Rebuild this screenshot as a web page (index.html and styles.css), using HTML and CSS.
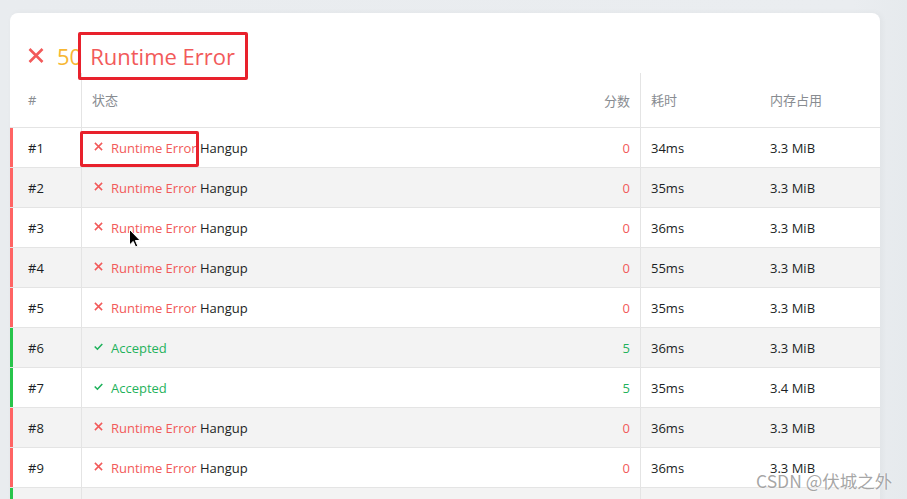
FILE: index.html
```html
<!DOCTYPE html>
<html lang="zh">
<head>
<meta charset="utf-8">
<title>Submission</title>
<link rel="stylesheet" href="styles.css">
</head>
<body>
<div class="card">
  <div class="title">
    <svg class="t-icon" width="16" height="15" viewBox="0 0 16 15"><path d="M1.5 1 L14.5 14 M14.5 1 L1.5 14" stroke="#f25a5a" stroke-width="2.6" fill="none"/></svg>
    <span class="t-score">50</span>
    <span class="t-status">Runtime Error</span>
  </div>
  <div class="table">
    <div class="row head">
      <div class="c c-id">#</div>
      <div class="c c-status">状态</div>
      <div class="c c-score">分数</div>
      <div class="c c-time">耗时</div>
      <div class="c c-mem">内存占用</div>
    </div>
    <div class="row re">
      <div class="c c-id">#1</div>
      <div class="c c-status"><svg class="ic" viewBox="0 0 10 10"><path d="M1 1 L9 9 M9 1 L1 9"/></svg><span class="st">Runtime Error</span>&nbsp;Hangup</div>
      <div class="c c-score">0</div>
      <div class="c c-time">34ms</div>
      <div class="c c-mem">3.3 MiB</div>
    </div>
    <div class="row re alt">
      <div class="c c-id">#2</div>
      <div class="c c-status"><svg class="ic" viewBox="0 0 10 10"><path d="M1 1 L9 9 M9 1 L1 9"/></svg><span class="st">Runtime Error</span>&nbsp;Hangup</div>
      <div class="c c-score">0</div>
      <div class="c c-time">35ms</div>
      <div class="c c-mem">3.3 MiB</div>
    </div>
    <div class="row re">
      <div class="c c-id">#3</div>
      <div class="c c-status"><svg class="ic" viewBox="0 0 10 10"><path d="M1 1 L9 9 M9 1 L1 9"/></svg><span class="st">Runtime Error</span>&nbsp;Hangup</div>
      <div class="c c-score">0</div>
      <div class="c c-time">36ms</div>
      <div class="c c-mem">3.3 MiB</div>
    </div>
    <div class="row re alt">
      <div class="c c-id">#4</div>
      <div class="c c-status"><svg class="ic" viewBox="0 0 10 10"><path d="M1 1 L9 9 M9 1 L1 9"/></svg><span class="st">Runtime Error</span>&nbsp;Hangup</div>
      <div class="c c-score">0</div>
      <div class="c c-time">55ms</div>
      <div class="c c-mem">3.3 MiB</div>
    </div>
    <div class="row re">
      <div class="c c-id">#5</div>
      <div class="c c-status"><svg class="ic" viewBox="0 0 10 10"><path d="M1 1 L9 9 M9 1 L1 9"/></svg><span class="st">Runtime Error</span>&nbsp;Hangup</div>
      <div class="c c-score">0</div>
      <div class="c c-time">35ms</div>
      <div class="c c-mem">3.3 MiB</div>
    </div>
    <div class="row ac alt">
      <div class="c c-id">#6</div>
      <div class="c c-status"><svg class="ic" viewBox="0 0 10 10"><path d="M0.8 5 L3.8 8 L9.2 2.2"/></svg><span class="st">Accepted</span></div>
      <div class="c c-score">5</div>
      <div class="c c-time">36ms</div>
      <div class="c c-mem">3.3 MiB</div>
    </div>
    <div class="row ac">
      <div class="c c-id">#7</div>
      <div class="c c-status"><svg class="ic" viewBox="0 0 10 10"><path d="M0.8 5 L3.8 8 L9.2 2.2"/></svg><span class="st">Accepted</span></div>
      <div class="c c-score">5</div>
      <div class="c c-time">35ms</div>
      <div class="c c-mem">3.4 MiB</div>
    </div>
    <div class="row re alt">
      <div class="c c-id">#8</div>
      <div class="c c-status"><svg class="ic" viewBox="0 0 10 10"><path d="M1 1 L9 9 M9 1 L1 9"/></svg><span class="st">Runtime Error</span>&nbsp;Hangup</div>
      <div class="c c-score">0</div>
      <div class="c c-time">36ms</div>
      <div class="c c-mem">3.3 MiB</div>
    </div>
    <div class="row re">
      <div class="c c-id">#9</div>
      <div class="c c-status"><svg class="ic" viewBox="0 0 10 10"><path d="M1 1 L9 9 M9 1 L1 9"/></svg><span class="st">Runtime Error</span>&nbsp;Hangup</div>
      <div class="c c-score">0</div>
      <div class="c c-time">36ms</div>
      <div class="c c-mem">3.3 MiB</div>
    </div>
    <div class="row ac alt last">
      <div class="c c-id"></div>
      <div class="c c-status"></div>
      <div class="c c-score"></div>
      <div class="c c-time"></div>
      <div class="c c-mem"></div>
    </div>
  </div>
</div>
<div class="mark mark-title"></div>
<div class="mark mark-row"></div>
<svg class="cursor" width="12" height="19" viewBox="0 0 12 19"><path d="M0.5 0.5 L0.5 16 L4.2 12.4 L6.6 18 L8.8 17 L6.4 11.5 L11.2 11.5 Z" fill="#000" stroke="#fff" stroke-width="1"/></svg>
<div class="watermark">CSDN @伏城之外</div>
</body>
</html>
```
FILE: styles.css
```css
html, body {
  margin: 0;
  padding: 0;
  height: 100%;
  overflow: hidden;
}
body {
  background: linear-gradient(90deg, #e9ecef 0%, #eaedf0 94%, #e6eaed 100%);
  font-family: "Open Sans", "Noto Sans CJK SC", sans-serif;
  color: #1b1f24;
  position: relative;
}
.card {
  margin: 13px 0 0 10px;
  width: 870px;
  height: 600px;
  background: #fff;
  border-radius: 8px 8px 0 0;
  overflow: hidden;
  box-shadow: 2px 0 6px rgba(0, 0, 0, 0.04);
}
.title {
  height: 60px;
  box-sizing: border-box;
  padding: 25px 0 0 18px;
  display: flex;
  align-items: center;
  font-size: 22px;
  line-height: 30px;
}
.t-icon {
  margin-right: 13px;
  flex: none;
}
.t-score {
  color: #f7b733;
  margin-right: 8px;
}
.t-status {
  color: #f25a5a;
}
.table {
  font-size: 13px;
}
.row {
  display: grid;
  grid-template-columns: 72px 1fr 80px 119px 120px;
  height: 40px;
  box-sizing: border-box;
  border-bottom: 1px solid #e4e4e4;
}
.row.alt {
  background: #f3f3f3;
}
.row.head {
  height: 55px;
  color: #888c91;
  padding-bottom: 2px;
}
.c {
  display: flex;
  align-items: center;
  white-space: nowrap;
  box-sizing: border-box;
}
.c-id {
  padding-left: 18px;
  border-right: 1px solid #e4e4e4;
}
.re .c-id, .ac .c-id {
  padding-left: 15px;
  border-left: 3px solid #ff6464;
}
.ac .c-id {
  border-left-color: #27c44b;
}
.c-status {
  padding-left: 12px;
}
.head .c-status {
  padding-left: 10px;
}
.c-score {
  justify-content: flex-end;
  padding-right: 10px;
  border-right: 1px solid #e4e4e4;
}
.head .c-score {
  margin-bottom: -2px;
}
.head .c-id {
  margin-bottom: -2px;
}
.c-time {
  padding-left: 10px;
}
.c-mem {
  padding-left: 10px;
}
.ic {
  width: 9px;
  height: 9px;
  margin-right: 8px;
  margin-top: -2px;
  flex: none;
  fill: none;
  stroke-width: 1.7;
}
.re .ic {
  stroke: #f25a5a;
}
.ac .ic {
  stroke: #1fb25c;
  stroke-width: 1.8;
}
.re .st, .re .c-score {
  color: #f25a5a;
}
.ac .st, .ac .c-score {
  color: #1fb25c;
}
.head .c-score, .head .c-time, .head .c-mem {
  color: #888c91;
}
.mark {
  position: absolute;
  border: 3px solid #e8212c;
  border-radius: 2px;
  box-sizing: border-box;
}
.mark-title {
  left: 78px;
  top: 32px;
  width: 170px;
  height: 48px;
}
.mark-row {
  left: 80px;
  top: 131px;
  width: 119px;
  height: 36px;
}
.cursor {
  position: absolute;
  left: 129px;
  top: 229px;
}
.watermark {
  position: absolute;
  left: 756px;
  top: 468px;
  font-family: "Noto Sans CJK SC", sans-serif;
  font-size: 17.5px;
  line-height: 26px;
  color: rgba(150, 150, 150, 0.85);
  text-shadow: 0 0 2px #fff;
}
```
